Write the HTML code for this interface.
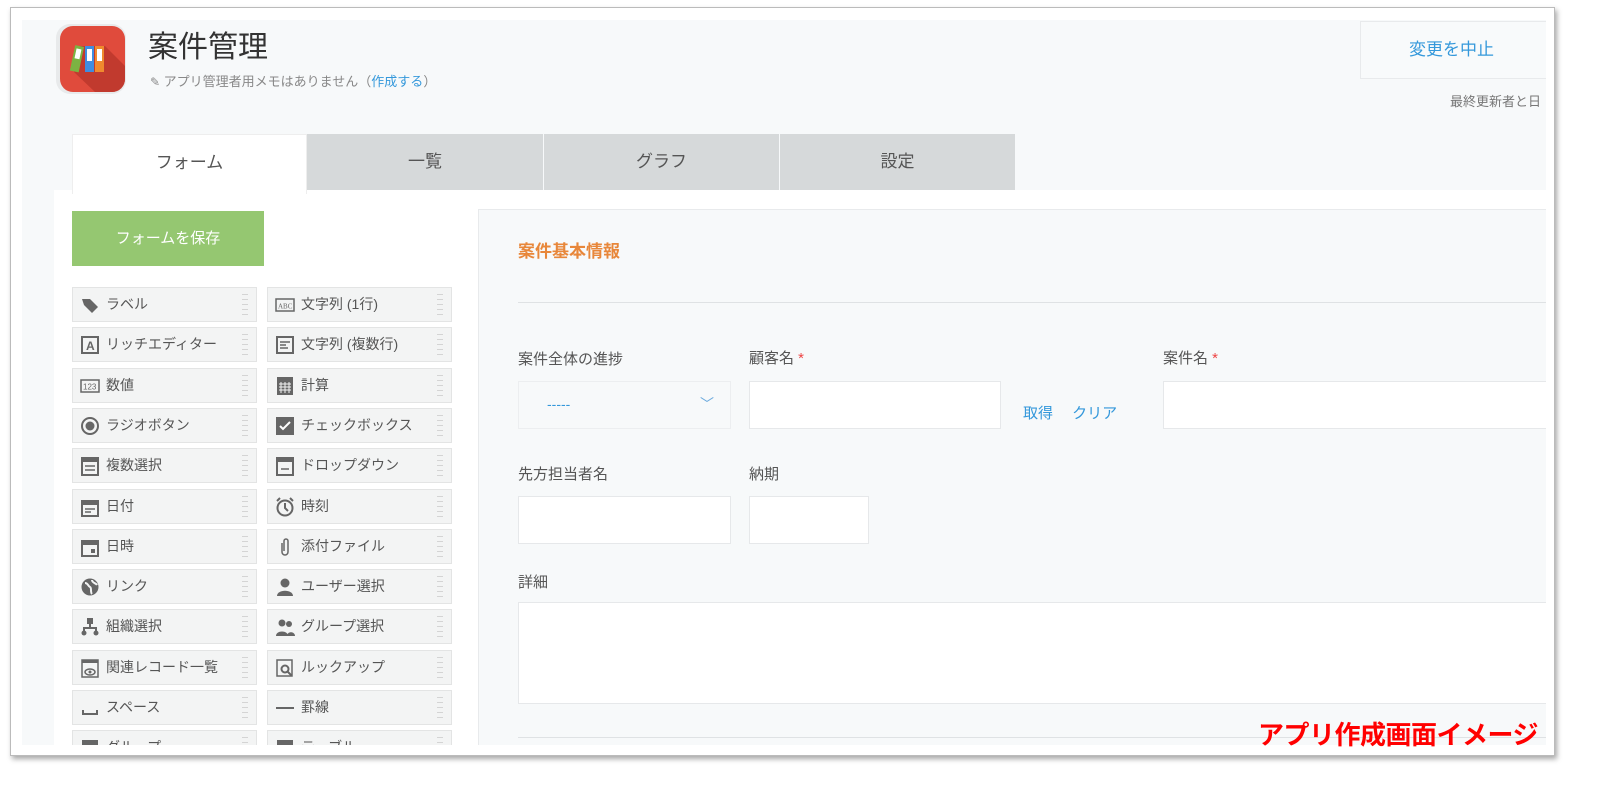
<!DOCTYPE html>
<html><head><meta charset="utf-8"><style>
*{margin:0;padding:0;box-sizing:border-box}
body{width:1620px;height:794px;background:#fff;position:relative;overflow:hidden;font-family:"Liberation Sans","Noto Sans CJK JP",sans-serif;color:#444}
.a{position:absolute}
#frame{left:10px;top:7px;width:1545px;height:749px;border:1px solid #bbb;box-shadow:2px 3px 5px rgba(0,0,0,.35);background:#fff}
#clip{left:22px;top:20px;width:1524px;height:725px;background:#f7f9fa;overflow:hidden}
.tab{top:114px;height:57px;background:#d6d9da;color:#555;font-size:17px;text-align:center;line-height:56px}
.item{width:185px;height:35px;background:#f3f4f4;border:1px solid #e3e4e4;font-size:14px;color:#555;line-height:33px;padding-left:33px;white-space:nowrap}
.item svg{position:absolute;left:7px;top:7px}
.item:after{content:"";position:absolute;right:8px;top:4px;width:6px;height:25px;background:repeating-linear-gradient(#f3f4f4 0 2px,#ccc 2px 3px,#f3f4f4 3px 5px);opacity:.8}
.lbl{font-size:15px;color:#555}
.inp{background:#fff;border:1px solid #e6e8ea}
.req{color:#e44;}
</style></head><body>
<div class="a" id="frame"></div>
<div class="a" id="clip">
 <div class="a" style="left:34px;top:4px;width:70px;height:70px;border-radius:14px;background:#e8eaeb"></div>
 <div class="a" style="left:38px;top:6px;width:65px;height:66px;border-radius:13px;background:#e04b3c;overflow:hidden">
  <svg width="65" height="66"><polygon points="20,20 45,20 65,40 65,66 35,66 14,46" fill="#c13a2e"/>
  <g transform="rotate(12 18 35)"><rect x="12" y="20" width="9" height="26" fill="#7cb342"/><rect x="14" y="23" width="5" height="10" fill="#fff"/></g>
  <rect x="25" y="20" width="9" height="26" fill="#3f8de0"/><rect x="27" y="23" width="5" height="12" fill="#fff"/>
  <rect x="35" y="20" width="9" height="26" fill="#f08a2e"/><rect x="37" y="23" width="5" height="12" fill="#fff"/></svg>
 </div>
 <div class="a" style="left:126px;top:2px;font-size:30px;color:#333">案件管理</div>
 <div class="a" style="left:128px;top:51px;font-size:13px;color:#888"><span style="font-size:12px">✎</span> アプリ管理者用メモはありません（<span style="color:#3498db">作成する</span>）</div>
 <div class="a" style="left:1338px;top:1px;width:190px;height:58px;border:1px solid #e8eaec;background:#f8fafb;color:#3498db;font-size:17px;line-height:56px;padding-left:48px">変更を中止</div>
 <div class="a" style="left:1428px;top:71px;font-size:13px;color:#777;white-space:nowrap">最終更新者と日</div>
 <div class="a tab" style="left:285px;width:236px">一覧</div>
 <div class="a tab" style="left:522px;width:235px">グラフ</div>
 <div class="a tab" style="left:758px;width:235px">設定</div>
 <div class="a" style="left:32px;top:170px;width:1500px;height:560px;background:#fff"></div>
 <div class="a tab" style="left:50px;width:235px;height:60px;background:#fff;border:1px solid #eee;border-bottom:none">フォーム</div>
 <div class="a" style="left:50px;top:191px;width:192px;height:55px;background:#95c771;color:#fff;font-size:15px;text-align:center;line-height:55px">フォームを保存</div>
 <div id="pal"></div>
 <div class="a" style="left:456px;top:189px;width:1080px;height:560px;background:#f7f9fa;border:1px solid #e8eaec"></div>
 <div class="a" style="left:496px;top:217px;font-size:17px;color:#e8873a;font-weight:bold">案件基本情報</div>
 <div class="a" style="left:496px;top:282px;width:1040px;height:1px;background:#dfe2e4"></div>
 <div class="a lbl" style="left:496px;top:328px">案件全体の進捗</div>
 <div class="a lbl" style="left:727px;top:327px">顧客名 <span class="req">*</span></div>
 <div class="a lbl" style="left:1141px;top:327px">案件名 <span class="req">*</span></div>
 <div class="a" style="left:496px;top:361px;width:213px;height:48px;border:1px solid #eceef0;background:#f7f9fa;color:#3498db;font-size:14px;line-height:44px;padding-left:28px">-----<span style="position:absolute;right:16px;top:0;color:#6aa9dd">﹀</span></div>
 <div class="a inp" style="left:727px;top:361px;width:252px;height:48px"></div>
 <div class="a" style="left:1001px;top:382px;color:#3498db;font-size:15px">取得　 クリア</div>
 <div class="a inp" style="left:1141px;top:361px;width:400px;height:48px"></div>
 <div class="a lbl" style="left:496px;top:443px">先方担当者名</div>
 <div class="a lbl" style="left:727px;top:443px">納期</div>
 <div class="a inp" style="left:496px;top:476px;width:213px;height:48px"></div>
 <div class="a inp" style="left:727px;top:476px;width:120px;height:48px"></div>
 <div class="a lbl" style="left:496px;top:551px">詳細</div>
 <div class="a inp" style="left:496px;top:582px;width:1040px;height:102px"></div>
 <div class="a" style="left:496px;top:717px;width:1040px;height:1px;background:#dfe2e4"></div>
</div>
<div class="a" style="left:1258px;top:715px;font-size:26px;font-weight:bold;color:#f00;letter-spacing:-0.5px;white-space:nowrap">アプリ作成画面イメージ</div>
<script>
var L=["ラベル","リッチエディター","数値","ラジオボタン","複数選択","日付","日時","リンク","組織選択","関連レコード一覧","スペース","グループ"];
var R=["文字列 (1行)","文字列 (複数行)","計算","チェックボックス","ドロップダウン","時刻","添付ファイル","ユーザー選択","グループ選択","ルックアップ","罫線","テーブル"];
var ic=[
'<path d="M2 4h8l8 8-6 6-8-8z" fill="#666"/>',
'<rect x="2" y="2" width="16" height="16" fill="none" stroke="#666" stroke-width="2"/><text x="6" y="15" font-size="12" font-weight="bold" fill="#666" font-family="Liberation Sans">A</text>',
'<rect x="1" y="4" width="18" height="12" fill="none" stroke="#666" stroke-width="1.5"/><text x="3" y="13.5" font-size="8" fill="#666" font-family="Liberation Sans">123</text>',
'<circle cx="10" cy="10" r="8" fill="none" stroke="#666" stroke-width="2"/><circle cx="10" cy="10" r="4.5" fill="#666"/>',
'<rect x="2" y="2" width="16" height="17" fill="none" stroke="#666" stroke-width="2"/><rect x="2" y="2" width="16" height="4" fill="#666"/><path d="M5 10h10M5 14h10" stroke="#666" stroke-width="1.5"/>',
'<rect x="2" y="4" width="16" height="15" fill="none" stroke="#666" stroke-width="2"/><rect x="2" y="4" width="16" height="4" fill="#666"/><path d="M5 12h10M5 15h6" stroke="#666" stroke-width="1.5"/>',
'<rect x="2" y="4" width="16" height="15" fill="none" stroke="#666" stroke-width="2"/><rect x="2" y="4" width="16" height="4" fill="#666"/><rect x="11" y="12" width="4" height="4" fill="#666"/>',
'<circle cx="10" cy="10" r="8.5" fill="#666"/><path d="M5 6c3 0 3 3 5 4s0 5 2 7M12 3c0 3 4 3 5 5" stroke="#f3f4f4" stroke-width="2" fill="none"/>',
'<rect x="7" y="1" width="6" height="6" fill="#666"/><path d="M10 7v4M4 14v-3h12v3" stroke="#666" stroke-width="2" fill="none"/><circle cx="4" cy="16" r="2.5" fill="#666"/><circle cx="16" cy="16" r="2.5" fill="#666"/>',
'<rect x="2" y="2" width="16" height="17" fill="none" stroke="#666" stroke-width="1.5"/><rect x="2" y="2" width="16" height="3" fill="#666"/><ellipse cx="10" cy="14" rx="5" ry="3" fill="none" stroke="#666" stroke-width="1.5"/><circle cx="10" cy="14" r="1.5" fill="#666"/>',
'<path d="M3 12v4h14v-4" stroke="#666" stroke-width="2" fill="none"/>',
'<rect x="2" y="2" width="16" height="6" fill="#666"/>'];
var ir=[
'<rect x="1" y="4" width="18" height="12" fill="none" stroke="#666" stroke-width="1.5"/><text x="3" y="13.5" font-size="7" fill="#666" font-family="Liberation Serif">ABC</text>',
'<rect x="2" y="2" width="16" height="16" fill="none" stroke="#666" stroke-width="2"/><path d="M5 7h10M5 10h6M5 13h8" stroke="#666" stroke-width="1.5"/>',
'<rect x="2" y="1" width="16" height="18" fill="#666"/><path d="M4 8h12M4 11h12M4 14h12M6 6v11M10 6v11M14 6v11" stroke="#f3f4f4" stroke-width="1"/>',
'<rect x="1" y="1" width="18" height="18" fill="#666"/><path d="M5 10l3 3 7-7" stroke="#fff" stroke-width="2" fill="none"/>',
'<rect x="2" y="2" width="16" height="17" fill="none" stroke="#666" stroke-width="2"/><rect x="2" y="2" width="16" height="4" fill="#666"/><path d="M6 13h8" stroke="#666" stroke-width="1.5"/>',
'<circle cx="10" cy="11" r="7.5" fill="none" stroke="#666" stroke-width="2"/><path d="M10 6v5l3 3M2 4l3-3M18 4l-3-3" stroke="#666" stroke-width="2" fill="none"/>',
'<path d="M7 6v9a3 3 0 006 0V4a2 2 0 00-4 0v10" stroke="#666" stroke-width="1.5" fill="none"/>',
'<circle cx="10" cy="6" r="4.5" fill="#666"/><path d="M2 19c0-7 16-7 16 0z" fill="#666"/>',
'<circle cx="7" cy="6" r="3.5" fill="#666"/><circle cx="14" cy="7" r="3" fill="#666"/><path d="M1 19c0-6 12-6 12 0zM12 19c0-5 8-5 8 0z" fill="#666"/>',
'<rect x="2" y="2" width="15" height="16" fill="none" stroke="#666" stroke-width="1.5"/><circle cx="10" cy="11" r="3.5" fill="none" stroke="#666" stroke-width="2"/><path d="M12.5 13.5l4 4" stroke="#666" stroke-width="2"/>',
'<path d="M1 10h18" stroke="#666" stroke-width="2"/>',
'<rect x="2" y="2" width="16" height="6" fill="#666"/>'];
var h="";
for(var i=0;i<12;i++){var t=267+i*40.3;
h+='<div class="a item" style="left:50px;top:'+t+'px"><svg width="20" height="20">'+ic[i]+'</svg>'+L[i]+'</div>';
h+='<div class="a item" style="left:245px;top:'+t+'px"><svg width="20" height="20">'+ir[i]+'</svg>'+R[i]+'</div>';}
document.getElementById("pal").innerHTML=h;
</script>
</body></html>
